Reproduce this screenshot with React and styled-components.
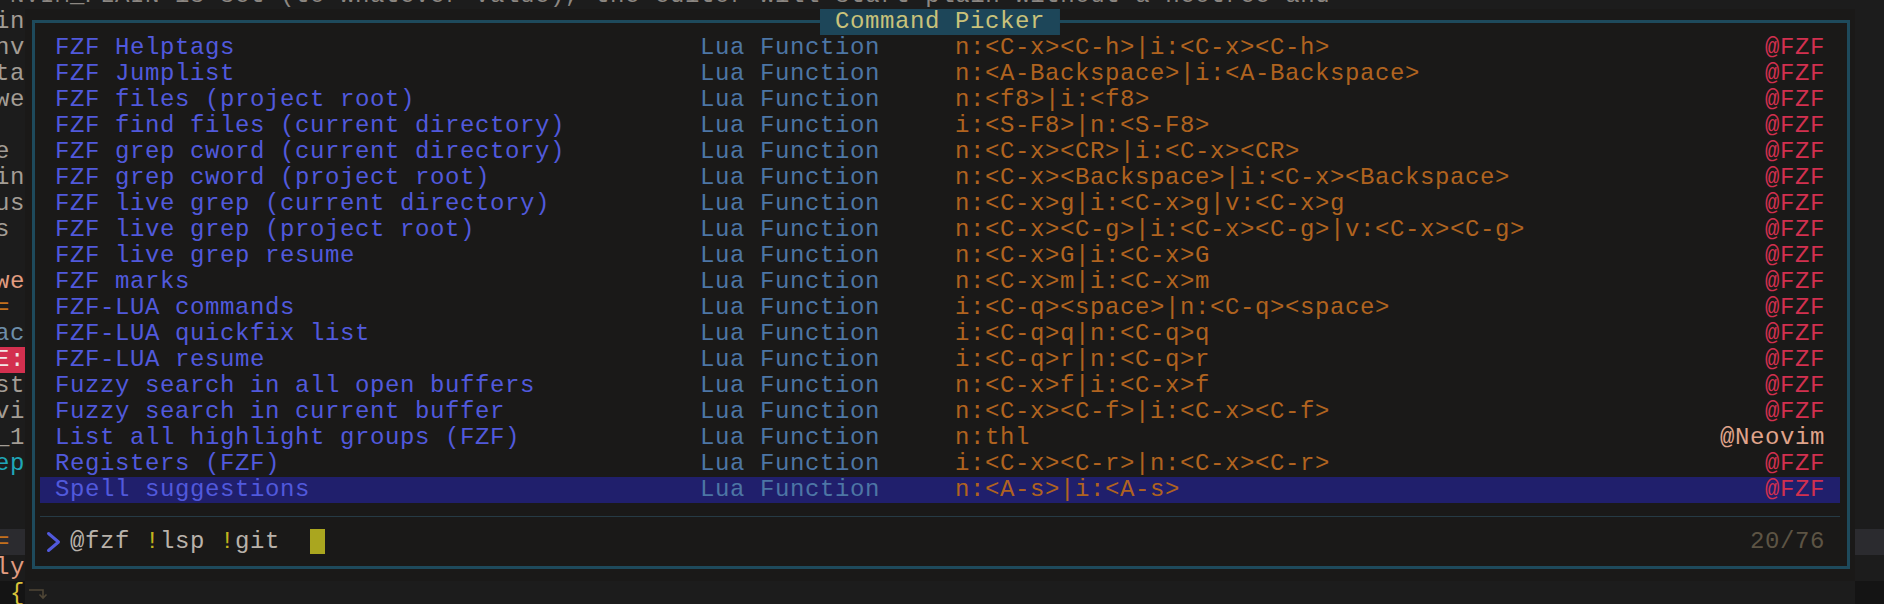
import React from 'react'
import styled, { createGlobalStyle } from 'styled-components'

const GlobalStyle = createGlobalStyle`
  html, body {
    margin: 0;
    padding: 0;
    background: #1c1c1c;
    overflow: hidden;
  }
`

const Screen = styled.div`
  width: 1884px;
  height: 604px;
  overflow: hidden;
  background: #1c1c1c;
  font-family: "Liberation Mono", "DejaVu Sans Mono", monospace;
  font-size: 24px;
  letter-spacing: 0.6px;
  line-height: 26px;
  white-space: pre;
`

// terminal grid is offset: cells start at x=-5, rows at y=-17
const Canvas = styled.div`
  margin: -17px 0 0 -5px;
  display: flex;
  flex-direction: column;
`

const TopLine = styled.div`
  height: 26px;
  padding-left: 15px;
  color: #8c8782;
`

const Main = styled.div`
  display: flex;
`

const Gutter = styled.div`
  width: 30px;
  flex-shrink: 0;
  display: flex;
  flex-direction: column;
`

const Line = styled.div`
  height: 26px;
  color: ${(p) => p.$color || '#a39d95'};
  background: ${(p) => p.$bg || 'transparent'};
`

const Center = styled.div`
  width: 1830px;
  flex-shrink: 0;
  display: flex;
  flex-direction: column;
`

const RightEdge = styled.div`
  flex: 1;
  display: flex;
  flex-direction: column;
`

const Float = styled.div`
  position: relative;
  height: 572px;
  background: #1a1918;
  padding: 11px 5px 12px 7px;
  box-sizing: border-box;
`

const Frame = styled.div`
  height: 100%;
  box-sizing: border-box;
  border: 3px solid #1e4a5c;
  padding: 12px 7px 11px 5px;
  display: flex;
  flex-direction: column;
`

const Title = styled.div`
  position: absolute;
  top: 0;
  left: 50%;
  transform: translateX(-50%);
  height: 26px;
  background: #1d4659;
  color: #c9c27a;
`

const List = styled.div`
  display: flex;
  flex-direction: column;
`

const Row = styled.div`
  height: 26px;
  display: flex;
  padding: 0 15px;
  background: ${(p) => (p.$selected ? '#201f6c' : 'transparent')};
`

const Name = styled.span`
  width: 645px;
  flex-shrink: 0;
  color: #5159dc;
`

const Desc = styled.span`
  width: 255px;
  flex-shrink: 0;
  color: #4d76a5;
`

const Keys = styled.span`
  flex: 1;
  color: #b0631f;
`

const Source = styled.span`
  color: ${(p) => (p.$neovim ? '#e0a48b' : '#d2304f')};
`

const Separator = styled.div`
  height: 26px;
  display: flex;
  align-items: center;
  &::before {
    content: '';
    flex: 1;
    height: 1px;
    background: #263a44;
  }
`

const Prompt = styled.div`
  height: 26px;
  display: flex;
  align-items: center;
  padding-right: 15px;
`

const Query = styled.span`
  flex: 1;
  color: #b9b2aa;
`

const Bang = styled.span`
  color: #c2b41e;
`

const Cursor = styled.span`
  display: inline-block;
  width: 15px;
  height: 25px;
  vertical-align: top;
  background: #aaa61f;
`

const Count = styled.span`
  color: #5d5444;
`

const BelowLine = styled.div`
  height: 26px;
  padding-left: 0;
  display: flex;
  align-items: center;
`

const gutter = [
  ['in'], ['nv'], ['ta'], ['we'], [''], ['e'], ['in'], ['us'], ['s'], [''],
  ['we', '#e29c80'], ['=', '#c3701c'], ['ac', '#6d8eaa'], ['E:', '#f2e6e6', '#d3304f'],
  ['st'], ['vi'], ['_1'], ['ep', '#1fa6b8'], [''], [''],
  ['=', '#c3701c', '#2b2b2f'], ['ly', '#e29c80'], [' {', '#d9c23a', '#141414'],
]

const items = [
  ['FZF Helptags', 'n:<C-x><C-h>|i:<C-x><C-h>', '@FZF'],
  ['FZF Jumplist', 'n:<A-Backspace>|i:<A-Backspace>', '@FZF'],
  ['FZF files (project root)', 'n:<f8>|i:<f8>', '@FZF'],
  ['FZF find files (current directory)', 'i:<S-F8>|n:<S-F8>', '@FZF'],
  ['FZF grep cword (current directory)', 'n:<C-x><CR>|i:<C-x><CR>', '@FZF'],
  ['FZF grep cword (project root)', 'n:<C-x><Backspace>|i:<C-x><Backspace>', '@FZF'],
  ['FZF live grep (current directory)', 'n:<C-x>g|i:<C-x>g|v:<C-x>g', '@FZF'],
  ['FZF live grep (project root)', 'n:<C-x><C-g>|i:<C-x><C-g>|v:<C-x><C-g>', '@FZF'],
  ['FZF live grep resume', 'n:<C-x>G|i:<C-x>G', '@FZF'],
  ['FZF marks', 'n:<C-x>m|i:<C-x>m', '@FZF'],
  ['FZF-LUA commands', 'i:<C-q><space>|n:<C-q><space>', '@FZF'],
  ['FZF-LUA quickfix list', 'i:<C-q>q|n:<C-q>q', '@FZF'],
  ['FZF-LUA resume', 'i:<C-q>r|n:<C-q>r', '@FZF'],
  ['Fuzzy search in all open buffers', 'n:<C-x>f|i:<C-x>f', '@FZF'],
  ['Fuzzy search in current buffer', 'n:<C-x><C-f>|i:<C-x><C-f>', '@FZF'],
  ['List all highlight groups (FZF)', 'n:thl', '@Neovim'],
  ['Registers (FZF)', 'i:<C-x><C-r>|n:<C-x><C-r>', '@FZF'],
  ['Spell suggestions', 'n:<A-s>|i:<A-s>', '@FZF'],
]

const Chevron = () => (
  <svg width="30" height="26" viewBox="0 0 30 26">
    <path d="M8.5 4.5 L18.5 13 L8.5 21.5" fill="none" stroke="#5159dc" strokeWidth="3" strokeLinecap="round" strokeLinejoin="round" />
  </svg>
)

const ReturnMark = () => (
  <svg width="30" height="26" viewBox="0 0 30 26">
    <path d="M4 9 H18 V17 M14.5 13.5 L18 17 L21.5 13.5" fill="none" stroke="#4f4636" strokeWidth="1.6" />
  </svg>
)

const App = () => {
  return (
    <Screen>
      <GlobalStyle />
      <Canvas>
        <TopLine>NVIM_PLAIN is set (to whatever value), the editor will start plain without a neotree and</TopLine>
        <Main>
          <Gutter>
            {gutter.map(([t, c, bg], i) => (
              <Line key={i} $color={c} $bg={bg}>{t}</Line>
            ))}
          </Gutter>
          <Center>
            <Float>
              <Title> Command Picker </Title>
              <Frame>
                <List>
                  {items.map(([name, keys, src], i) => (
                    <Row key={i} $selected={i === items.length - 1}>
                      <Name>{name}</Name>
                      <Desc>Lua Function</Desc>
                      <Keys>{keys}</Keys>
                      <Source $neovim={src === '@Neovim'}>{src}</Source>
                    </Row>
                  ))}
                </List>
                <Separator />
                <Prompt>
                  <Chevron />
                  <Query>@fzf <Bang>!</Bang>lsp <Bang>!</Bang>git  <Cursor /></Query>
                  <Count>20/76</Count>
                </Prompt>
              </Frame>
            </Float>
            <BelowLine>
              <ReturnMark />
            </BelowLine>
          </Center>
          <RightEdge>
            {gutter.map(([, , bg], i) => (
              <Line key={i} $bg={i === 20 ? '#2b2b2f' : i === 22 ? '#141414' : undefined} />
            ))}
          </RightEdge>
        </Main>
      </Canvas>
    </Screen>
  )
}

export default App
